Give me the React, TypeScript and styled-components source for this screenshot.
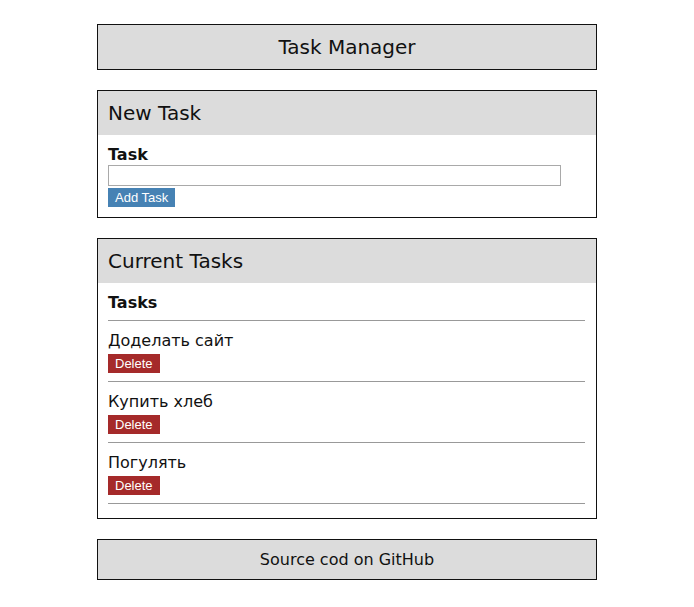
import React, { FC, useState } from 'react';
import styled, { createGlobalStyle } from 'styled-components';

const GlobalStyle = createGlobalStyle`
  html, body {
    margin: 0;
    padding: 0;
    background: #fff;
  }
  body {
    font-family: 'DejaVu Sans', Verdana, sans-serif;
    color: #111;
  }
`;

const Page = styled.div`
  width: 500px;
  margin: 0 auto;
  padding-top: 24px;
  display: flex;
  flex-direction: column;
  gap: 20px;
`;

const Banner = styled.div<{ h: number; size: number }>`
  box-sizing: border-box;
  height: ${(p) => p.h}px;
  border: 1px solid #111;
  background: #dcdcdc;
  display: flex;
  align-items: center;
  justify-content: center;
  font-size: ${(p) => p.size}px;
`;

const Panel = styled.section`
  border: 1px solid #111;
  background: #fff;
`;

const PanelHead = styled.h2`
  margin: 0;
  height: 44px;
  display: flex;
  align-items: center;
  padding: 0 10px;
  background: #dcdcdc;
  font-size: 20px;
  font-weight: normal;
`;

const PanelBody = styled.div<{ pb: number }>`
  padding: 10px 11px ${(p) => p.pb}px 10px;
`;

const Label = styled.label`
  display: block;
  font-size: 16px;
  font-weight: bold;
  line-height: 20px;
`;

const Input = styled.input`
  display: block;
  box-sizing: border-box;
  width: 453px;
  height: 21px;
  margin: 0;
  border: 1px solid #a9a9a9;
  padding: 1px 2px;
  outline: none;
`;

const Btn = styled.button<{ bg: string; mt: number }>`
  display: block;
  margin-top: ${(p) => p.mt}px;
  border: none;
  padding: 0 7px;
  height: 19px;
  background: ${(p) => p.bg};
  color: #fff;
  font-family: 'Liberation Sans', Arial, sans-serif;
  font-size: 13px;
  cursor: pointer;
`;

const ListTitle = styled.div`
  font-size: 16px;
  font-weight: bold;
  line-height: 20px;
  padding-bottom: 7px;
  border-bottom: 1px solid #999;
`;

const Item = styled.div`
  padding: 10px 0 8px;
  border-bottom: 1px solid #999;
`;

const ItemText = styled.div`
  font-size: 16px;
  line-height: 20px;
`;

const App: FC = () => {
  const [tasks] = useState(['Доделать сайт', 'Купить хлеб', 'Погулять']);
  return (
    <>
      <GlobalStyle />
      <Page>
        <Banner h={46} size={20}>Task Manager</Banner>
        <Panel>
          <PanelHead>New Task</PanelHead>
          <PanelBody pb={10}>
            <Label>Task</Label>
            <Input type='text' />
            <Btn bg='#4682b4' mt={2}>Add Task</Btn>
          </PanelBody>
        </Panel>
        <Panel>
          <PanelHead>Current Tasks</PanelHead>
          <PanelBody pb={14}>
            <ListTitle>Tasks</ListTitle>
            {tasks.map((t) => (
              <Item key={t}>
                <ItemText>{t}</ItemText>
                <Btn bg='#a52a2a' mt={3}>Delete</Btn>
              </Item>
            ))}
          </PanelBody>
        </Panel>
        <Banner h={41} size={16}>Source cod on GitHub</Banner>
      </Page>
    </>
  );
};

export default App;
